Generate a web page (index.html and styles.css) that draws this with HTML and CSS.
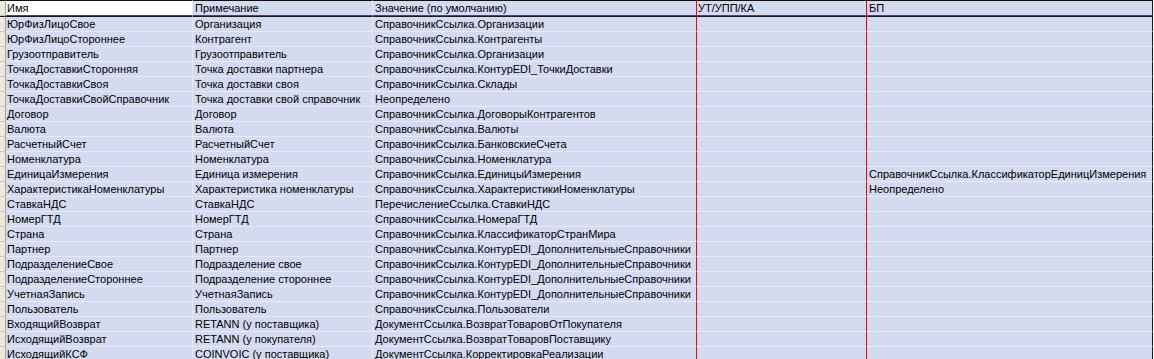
FILE: index.html
```html
<!DOCTYPE html>
<html>
<head>
<meta charset="utf-8">
<link rel="stylesheet" href="styles.css">
</head>
<body>
<table class="sheet">
  <colgroup>
    <col class="c-stub"><col class="c-name"><col class="c-note"><col class="c-val"><col class="c-ut"><col class="c-bp"><col class="c-end">
  </colgroup>
  <thead>
    <tr>
      <td class="stub"></td>
      <td class="name head-white"><div>Имя</div></td>
      <td class="note"><div>Примечание</div></td>
      <td class="val red"><div>Значение (по умолчанию)</div></td>
      <td class="ut red"><div>УТ/УПП/КА</div></td>
      <td class="bp edge"><div>БП</div></td>
      <td class="end"></td>
    </tr>
  </thead>
  <tbody>
    <tr class="first"><td class="stub"></td><td class="name"><div>ЮрФизЛицоСвое</div></td><td class="note"><div>Организация</div></td><td class="val red"><div>СправочникСсылка.Организации</div></td><td class="ut red"><div></div></td><td class="bp edge"><div></div></td><td class="end"></td></tr>
    <tr><td class="stub"></td><td class="name"><div>ЮрФизЛицоСтороннее</div></td><td class="note"><div>Контрагент</div></td><td class="val red"><div>СправочникСсылка.Контрагенты</div></td><td class="ut red"><div></div></td><td class="bp edge"><div></div></td><td class="end"></td></tr>
    <tr><td class="stub"></td><td class="name"><div>Грузоотправитель</div></td><td class="note"><div>Грузоотправитель</div></td><td class="val red"><div>СправочникСсылка.Организации</div></td><td class="ut red"><div></div></td><td class="bp edge"><div></div></td><td class="end"></td></tr>
    <tr><td class="stub"></td><td class="name"><div>ТочкаДоставкиСторонняя</div></td><td class="note"><div>Точка доставки партнера</div></td><td class="val red"><div>СправочникСсылка.КонтурEDI_ТочкиДоставки</div></td><td class="ut red"><div></div></td><td class="bp edge"><div></div></td><td class="end"></td></tr>
    <tr><td class="stub"></td><td class="name"><div>ТочкаДоставкиСвоя</div></td><td class="note"><div>Точка доставки своя</div></td><td class="val red"><div>СправочникСсылка.Склады</div></td><td class="ut red"><div></div></td><td class="bp edge"><div></div></td><td class="end"></td></tr>
    <tr><td class="stub"></td><td class="name"><div>ТочкаДоставкиСвойСправочник</div></td><td class="note"><div>Точка доставки свой справочник</div></td><td class="val red"><div>Неопределено</div></td><td class="ut red"><div></div></td><td class="bp edge"><div></div></td><td class="end"></td></tr>
    <tr><td class="stub"></td><td class="name"><div>Договор</div></td><td class="note"><div>Договор</div></td><td class="val red"><div>СправочникСсылка.ДоговорыКонтрагентов</div></td><td class="ut red"><div></div></td><td class="bp edge"><div></div></td><td class="end"></td></tr>
    <tr><td class="stub"></td><td class="name"><div>Валюта</div></td><td class="note"><div>Валюта</div></td><td class="val red"><div>СправочникСсылка.Валюты</div></td><td class="ut red"><div></div></td><td class="bp edge"><div></div></td><td class="end"></td></tr>
    <tr><td class="stub"></td><td class="name"><div>РасчетныйСчет</div></td><td class="note"><div>РасчетныйСчет</div></td><td class="val red"><div>СправочникСсылка.БанковскиеСчета</div></td><td class="ut red"><div></div></td><td class="bp edge"><div></div></td><td class="end"></td></tr>
    <tr><td class="stub"></td><td class="name"><div>Номенклатура</div></td><td class="note"><div>Номенклатура</div></td><td class="val red"><div>СправочникСсылка.Номенклатура</div></td><td class="ut red"><div></div></td><td class="bp edge"><div></div></td><td class="end"></td></tr>
    <tr><td class="stub"></td><td class="name"><div>ЕдиницаИзмерения</div></td><td class="note"><div>Единица измерения</div></td><td class="val red"><div>СправочникСсылка.ЕдиницыИзмерения</div></td><td class="ut red"><div></div></td><td class="bp edge"><div>СправочникСсылка.КлассификаторЕдиницИзмерения</div></td><td class="end"></td></tr>
    <tr><td class="stub"></td><td class="name"><div>ХарактеристикаНоменклатуры</div></td><td class="note"><div>Характеристика номенклатуры</div></td><td class="val red"><div>СправочникСсылка.ХарактеристикиНоменклатуры</div></td><td class="ut red"><div></div></td><td class="bp edge"><div>Неопределено</div></td><td class="end"></td></tr>
    <tr><td class="stub"></td><td class="name"><div>СтавкаНДС</div></td><td class="note"><div>СтавкаНДС</div></td><td class="val red"><div>ПеречислениеСсылка.СтавкиНДС</div></td><td class="ut red"><div></div></td><td class="bp edge"><div></div></td><td class="end"></td></tr>
    <tr><td class="stub"></td><td class="name"><div>НомерГТД</div></td><td class="note"><div>НомерГТД</div></td><td class="val red"><div>СправочникСсылка.НомераГТД</div></td><td class="ut red"><div></div></td><td class="bp edge"><div></div></td><td class="end"></td></tr>
    <tr><td class="stub"></td><td class="name"><div>Страна</div></td><td class="note"><div>Страна</div></td><td class="val red"><div>СправочникСсылка.КлассификаторСтранМира</div></td><td class="ut red"><div></div></td><td class="bp edge"><div></div></td><td class="end"></td></tr>
    <tr><td class="stub"></td><td class="name"><div>Партнер</div></td><td class="note"><div>Партнер</div></td><td class="val red"><div>СправочникСсылка.КонтурEDI_ДополнительныеСправочники</div></td><td class="ut red"><div></div></td><td class="bp edge"><div></div></td><td class="end"></td></tr>
    <tr><td class="stub"></td><td class="name"><div>ПодразделениеСвое</div></td><td class="note"><div>Подразделение свое</div></td><td class="val red"><div>СправочникСсылка.КонтурEDI_ДополнительныеСправочники</div></td><td class="ut red"><div></div></td><td class="bp edge"><div></div></td><td class="end"></td></tr>
    <tr><td class="stub"></td><td class="name"><div>ПодразделениеСтороннее</div></td><td class="note"><div>Подразделение стороннее</div></td><td class="val red"><div>СправочникСсылка.КонтурEDI_ДополнительныеСправочники</div></td><td class="ut red"><div></div></td><td class="bp edge"><div></div></td><td class="end"></td></tr>
    <tr><td class="stub"></td><td class="name"><div>УчетнаяЗапись</div></td><td class="note"><div>УчетнаяЗапись</div></td><td class="val red"><div>СправочникСсылка.КонтурEDI_ДополнительныеСправочники</div></td><td class="ut red"><div></div></td><td class="bp edge"><div></div></td><td class="end"></td></tr>
    <tr><td class="stub"></td><td class="name"><div>Пользователь</div></td><td class="note"><div>Пользователь</div></td><td class="val red"><div>СправочникСсылка.Пользователи</div></td><td class="ut red"><div></div></td><td class="bp edge"><div></div></td><td class="end"></td></tr>
    <tr><td class="stub"></td><td class="name"><div>ВходящийВозврат</div></td><td class="note"><div>RETANN (у поставщика)</div></td><td class="val red"><div>ДокументСсылка.ВозвратТоваровОтПокупателя</div></td><td class="ut red"><div></div></td><td class="bp edge"><div></div></td><td class="end"></td></tr>
    <tr><td class="stub"></td><td class="name"><div>ИсходящийВозврат</div></td><td class="note"><div>RETANN (у покупателя)</div></td><td class="val red"><div>ДокументСсылка.ВозвратТоваровПоставщику</div></td><td class="ut red"><div></div></td><td class="bp edge"><div></div></td><td class="end"></td></tr>
    <tr><td class="stub"></td><td class="name"><div>ИсходящийКСФ</div></td><td class="note"><div>COINVOIC (у поставщика)</div></td><td class="val red"><div>ДокументСсылка.КорректировкаРеализации</div></td><td class="ut red"><div></div></td><td class="bp edge"><div></div></td><td class="end"></td></tr>
  </tbody>
</table>
</body>
</html>
```

FILE: styles.css
```css
html, body {
  margin: 0;
  padding: 0;
  background: #ffffff;
  overflow: hidden;
}
.sheet {
  border-collapse: separate;
  border-spacing: 0;
  table-layout: fixed;
  width: 1154px;
  font-family: "Liberation Sans", Arial, sans-serif;
  font-size: 11px;
  color: #000;
}
.c-stub { width: 6px; }
.c-name { width: 187px; }
.c-note { width: 180px; }
.c-val { width: 324px; }
.c-ut { width: 170px; }
.c-bp { width: 286px; }
.c-end { width: 1px; }

.sheet td {
  padding: 0;
  background: #d4daf0;
  border-right: 1px solid #e6e8f2;
  border-bottom: 1px solid #e6e8f2;
  vertical-align: top;
}
.sheet td > div {
  height: 14px;
  line-height: 14px;
  overflow: hidden;
  white-space: nowrap;
  padding-left: 1px;
}
.sheet td.bp > div { padding-left: 2px; }
.sheet td.note > div,
.sheet td.val > div { padding-left: 2px; }

.sheet td.stub {
  background: #ebe8dc;
  border-right: 1px solid #a8a59a;
  border-bottom: 1px solid #c9c5b8;
  height: 14px;
}
.sheet td.red { border-right-color: #ff0000; }
.sheet td.edge { border-right: 1px solid #1a1a1a; }
.sheet td.end {
  background: #ffffff;
  border-right: 0;
  border-bottom: 0;
}

/* header */
.sheet thead td {
  border-top: 1px solid #111;
  border-bottom: 1px solid #ff0000;
}
.sheet thead td.head-white { background: #ffffff; }
.sheet thead td.end { border-top: 0; border-bottom: 0; }

/* first data row carries the dark line under the header */
.sheet tbody tr.first td { border-top: 1px solid #1a1a1a; }
.sheet tbody tr.first td.end { border-top: 0; }
```
